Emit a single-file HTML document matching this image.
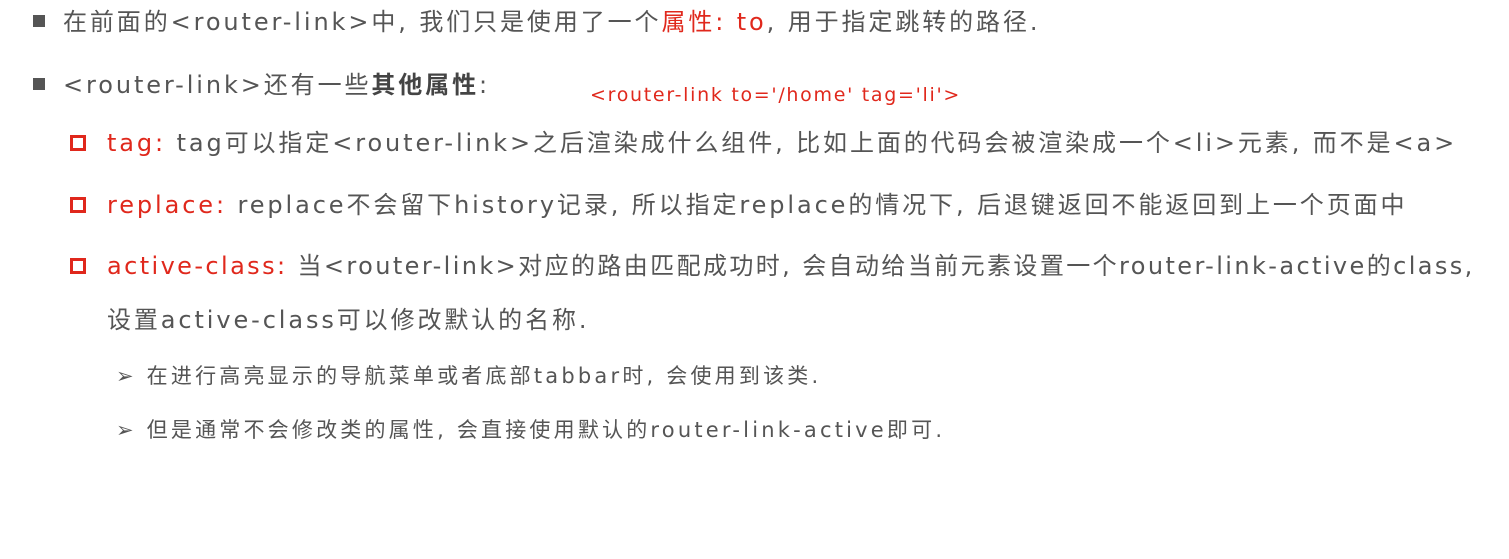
<!DOCTYPE html>
<html><head><meta charset="utf-8"><style>
body{margin:0;width:1509px;height:559px;background:#fff;overflow:hidden;font-family:"DejaVu Sans","Noto Sans CJK SC",sans-serif;color:#555;position:relative}
.l{position:absolute;white-space:nowrap;font-size:24px;line-height:30px;letter-spacing:2.9px}
.r{color:#e0281c}
.sq{position:absolute;width:12px;height:12px;background:#555}
.rb{position:absolute;width:10px;height:10px;border:3px solid #e0281c}
.s{font-size:21px;letter-spacing:3.2px}
b{font-weight:bold;color:#444}
</style></head><body>
<div class="sq" style="left:33px;top:15px"></div>
<div class="l" style="left:63px;top:7px">在前面的&lt;router-link&gt;中, 我们只是使用了一个<span class="r">属性: to</span>, 用于指定跳转的路径.</div>
<div class="sq" style="left:33px;top:78px"></div>
<div class="l" style="left:63px;top:70px">&lt;router-link&gt;还有一些<b>其他属性</b>:</div>
<div class="l r" style="left:590px;top:80px;font-size:19px;letter-spacing:1.7px">&lt;router-link to='/home' tag='li'&gt;</div>
<div class="rb" style="left:70px;top:135px"></div>
<div class="l" style="left:107px;top:128px"><span class="r">tag:</span> tag可以指定&lt;router-link&gt;之后渲染成什么组件, 比如上面的代码会被渲染成一个&lt;li&gt;元素, 而不是&lt;a&gt;</div>
<div class="rb" style="left:70px;top:197px"></div>
<div class="l" style="left:107px;top:190px"><span class="r">replace:</span> replace不会留下history记录, 所以指定replace的情况下, 后退键返回不能返回到上一个页面中</div>
<div class="rb" style="left:70px;top:258px"></div>
<div class="l" style="left:107px;top:251px;letter-spacing:2.4px"><span class="r">active-class:</span> 当&lt;router-link&gt;对应的路由匹配成功时, 会自动给当前元素设置一个router-link-active的class,</div>
<div class="l" style="left:107px;top:305px">设置active-class可以修改默认的名称.</div>
<div class="l s" style="left:116px;top:361px">➢ 在进行高亮显示的导航菜单或者底部tabbar时, 会使用到该类.</div>
<div class="l s" style="left:116px;top:415px">➢ 但是通常不会修改类的属性, 会直接使用默认的router-link-active即可.</div>
</body></html>
